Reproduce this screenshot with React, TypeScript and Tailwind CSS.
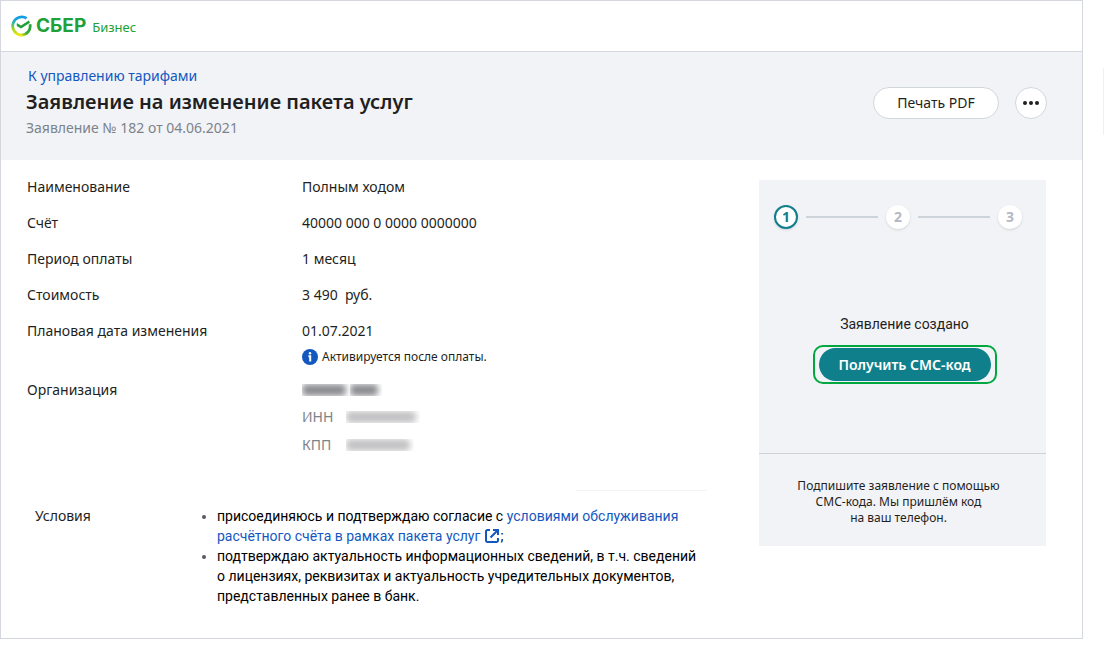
import React from "react";
import { clsx } from "clsx";

const SberLogo: React.FC = () => (
  <a href="#" aria-label="СБЕР Бизнес" className="flex items-center gap-1">
    <svg viewBox="0 0 22 22" className="size-[22px]" fill="none">
      <defs>
        <linearGradient id="ringLeft" x1="0" y1="0" x2="0" y2="1">
          <stop offset="0" stopColor="#109be8" />
          <stop offset="0.3" stopColor="#2bb5b0" />
          <stop offset="0.6" stopColor="#8fd02c" />
          <stop offset="1" stopColor="#f0e612" />
        </linearGradient>
        <linearGradient id="ringRight" x1="1" y1="0" x2="0" y2="1">
          <stop offset="0" stopColor="#21a038" />
          <stop offset="0.6" stopColor="#3aab32" />
          <stop offset="1" stopColor="#f0e612" />
        </linearGradient>
      </defs>
      <path
        d="M16.6 3.3A9.1 9.1 0 1 0 11 20.1"
        stroke="url(#ringLeft)"
        strokeWidth="2.8"
      />
      <path
        d="M20 9.2A9.1 9.1 0 0 1 10.9 20.1"
        stroke="url(#ringRight)"
        strokeWidth="2.8"
      />
      <path d="M6.8 8V11L11 13.6L20 7.8L18.8 5.4L11 10.6Z" fill="#21a038" />
    </svg>
    <span className="flex items-baseline gap-1.5 text-[#21a038]">
      <span className="font-[Inter,sans-serif] text-[19px] leading-6 font-bold">
        СБЕР
      </span>
      <span className="text-[13px]">Бизнес</span>
    </span>
  </a>
);

const InfoIcon: React.FC = () => (
  <svg viewBox="0 0 16 16" className="size-4 shrink-0">
    <circle cx="8" cy="8" r="8" fill="#1358bf" />
    <circle cx="8" cy="4.2" r="1.2" fill="#fff" />
    <path d="M6.4 7.3H8.2V12.6" stroke="#fff" strokeWidth="2" fill="none" />
  </svg>
);

const ExternalIcon: React.FC = () => (
  <svg
    viewBox="0 0 16 16"
    className="ml-1 inline size-4 align-[-3px]"
    fill="none"
    stroke="#1358bf"
    strokeWidth="2"
  >
    <path d="M6 2H3.5A1.5 1.5 0 0 0 2 3.5V12.5A1.5 1.5 0 0 0 3.5 14H12.5A1.5 1.5 0 0 0 14 12.5V10" />
    <path d="M9 2H14V7M14 2L6.5 9.5" />
  </svg>
);

interface RowProps {
  label: string;
  children: React.ReactNode;
}

const Row: React.FC<RowProps> = ({ label, children }) => (
  <div className="flex min-h-9">
    <dt className="w-[275px] shrink-0">{label}</dt>
    <dd>{children}</dd>
  </div>
);

const Hidden: React.FC<{ className: string }> = ({ className }) => (
  <span aria-hidden className="block h-3 overflow-hidden pr-1">
    <span className={clsx("block h-3 rounded-sm blur-[3px]", className)} />
  </span>
);

const steps = [1, 2, 3];

const Steps: React.FC<{ current: number }> = ({ current }) => (
  <ol className="flex items-center gap-2 pr-6 pl-[15px]">
    {steps.map((step) => (
      <React.Fragment key={step}>
        {step > 1 && <li aria-hidden className="h-0.5 flex-1 bg-[#cdd3da]" />}
        <li
          className={clsx(
            "flex size-6 items-center justify-center rounded-full bg-white text-sm leading-5 font-bold shadow",
            step === current
              ? "border-2 border-[#107f8c] text-[#107f8c]"
              : "text-[#b3b8c2]"
          )}
        >
          {step}
        </li>
      </React.Fragment>
    ))}
  </ol>
);

const SignPanel: React.FC = () => (
  <aside className="flex w-[287px] shrink-0 flex-col bg-[#f2f3f7] pt-[25px]">
    <Steps current={1} />
    <div className="flex flex-col items-center pt-[85px] pr-4 pb-[69px] pl-5">
      <p className="font-[Roboto,sans-serif]">Заявление создано</p>
      <div className="mt-[11px] rounded-[10px] border-2 border-[#00a83f] px-1 py-px">
        <button
          type="button"
          className="h-[33px] w-[172px] rounded-full bg-[#107f8c] text-sm font-semibold text-white"
        >
          Получить СМС-код
        </button>
      </div>
    </div>
    <p className="border-t border-[#cdd3da] pt-6 pr-2 pb-5 text-center text-xs">
      Подпишите заявление с помощью
      <br />
      СМС-кода. Мы пришлём код
      <br />
      на ваш телефон.
    </p>
  </aside>
);

const Terms: React.FC = () => (
  <section className="flex pl-2">
    <h2 className="w-[182px] shrink-0">Условия</h2>
    <ul className="max-w-[490px] list-disc font-[Roboto,sans-serif] text-black marker:text-[#565b62]">
      <li>
        присоединяюсь и подтверждаю согласие с{" "}
        <a href="#" className="text-[#1358bf]">
          условиями обслуживания
          <br />
          расчётного счёта в рамках пакета услуг
          <ExternalIcon />
        </a>
        ;
      </li>
      <li>
        подтверждаю актуальность информационных сведений, в т.ч. сведений
        <br />
        о лицензиях, реквизитах и актуальность учредительных документов,
        <br />
        представленных ранее в банк.
      </li>
    </ul>
  </section>
);

export default function App() {
  return (
    <div className="flex bg-white font-['Noto_Sans',sans-serif] text-sm text-[#1f1f22]">
      <div className="min-w-0 flex-1 border border-[#d5d7de] pb-8">
        <header className="flex h-[51px] items-center border-b border-[#d5d7de] px-[9px]">
          <SberLogo />
        </header>

        <div className="flex items-end justify-between bg-[#f2f3f7] pt-3.5 pr-[35px] pb-[22px] pl-[25px]">
          <div>
            <a href="#" className="block pl-0.5 text-[#1358bf]">
              К управлению тарифами
            </a>
            <h1 className="text-xl leading-8 font-semibold">
              Заявление на изменение пакета услуг
            </h1>
            <p className="text-[#7d838a]">Заявление № 182 от 04.06.2021</p>
          </div>
          <div className="flex gap-4 self-center pt-px">
            <button
              type="button"
              className="h-8 w-[126px] rounded-full border border-[#d0d7dd] bg-white"
            >
              Печать PDF
            </button>
            <button
              type="button"
              aria-label="Ещё"
              className="flex size-8 items-center justify-center rounded-full border border-[#d0d7dd] bg-white"
            >
              <svg viewBox="0 0 16 4" className="h-1 w-4" fill="#1f1f22">
                <circle cx="2" cy="2" r="2" />
                <circle cx="8" cy="2" r="2" />
                <circle cx="14" cy="2" r="2" />
              </svg>
            </button>
          </div>
        </div>

        <main className="flex items-start gap-8 pt-5 pr-9 pl-[26px]">
          <div className="min-w-0 flex-1">
            <dl className="-mt-[3px]">
              <Row label="Наименование">Полным ходом</Row>
              <Row label="Счёт">40000 000 0 0000 0000000</Row>
              <Row label="Период оплаты">1 месяц</Row>
              <Row label="Стоимость">3 490&nbsp; руб.</Row>
              <Row label="Плановая дата изменения">
                01.07.2021
                <p className="mt-1.5 mb-[13px] flex items-center gap-1 text-xs leading-5">
                  <InfoIcon />
                  Активируется после оплаты.
                </p>
              </Row>
              <Row label="Организация">
                <div className="flex h-5 items-center">
                  <Hidden className="w-11 bg-[#8b8c90]" />
                  <Hidden className="w-7 bg-[#8b8c90]" />
                </div>
                <div className="mt-[7px] flex items-center gap-3 text-[#7d838a]">
                  <span className="w-8">ИНН</span>
                  <Hidden className="w-[70px] bg-[#c2c2c4]" />
                </div>
                <div className="mt-2 flex items-center gap-3 text-[#7d838a]">
                  <span className="w-8">КПП</span>
                  <Hidden className="w-16 bg-[#c2c2c4]" />
                </div>
              </Row>
            </dl>
            <div className="mt-[35px] mr-5 mb-[15px] ml-auto h-px w-[131px] bg-[#f3f3f4]" />
            <Terms />
          </div>
          <SignPanel />
        </main>
      </div>
      <div className="mt-[68px] ml-5 h-[67px] w-px bg-[#f0f0f1]" />
    </div>
  );
}
